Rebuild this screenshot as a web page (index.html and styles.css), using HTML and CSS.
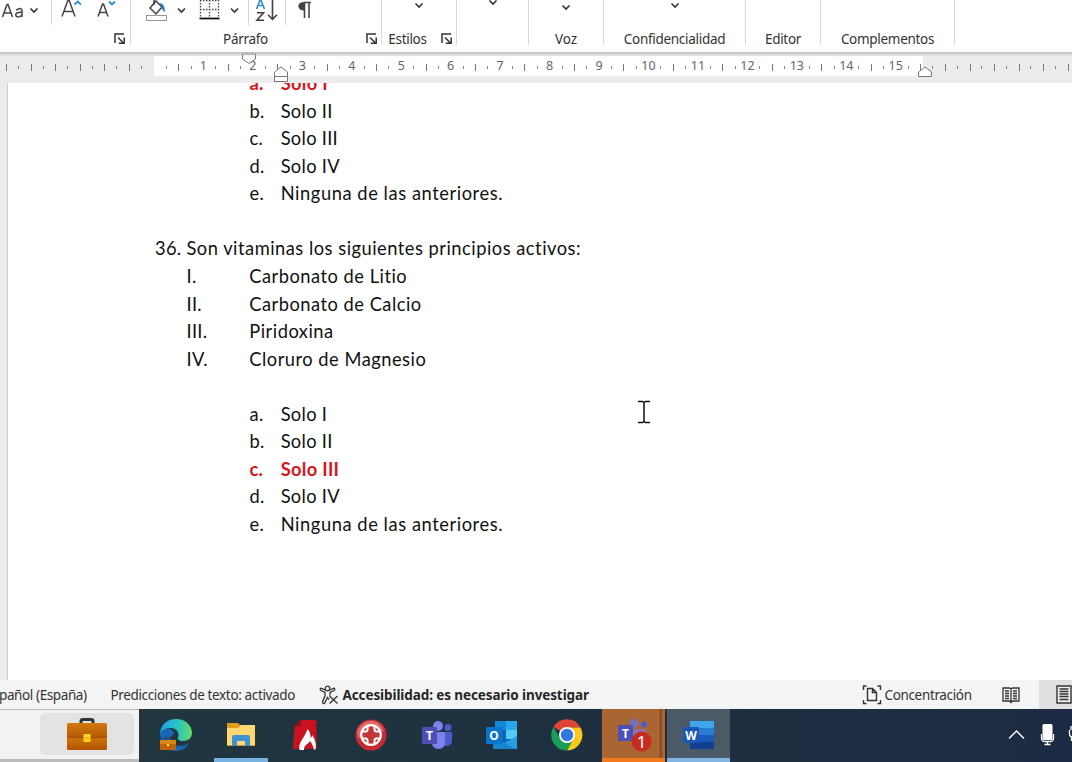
FILE: index.html
```html
<!DOCTYPE html>
<html lang="es">
<head>
<meta charset="utf-8">
<title>Documento - Word</title>
<link rel="stylesheet" href="styles.css">
</head>
<body>
<svg width="0" height="0" class="defs">
  <symbol id="chev" viewBox="0 0 10 7"><path d="M1.500 1.500 5 5 8.500 1.500" fill="none" stroke="#333" stroke-width="1.600"/></symbol>
  <symbol id="launch" viewBox="0 0 12 12"><path d="M1 10V1H10M4 4.500 9 9.500M10.200 4.500V10.200H4.800" fill="none" stroke="#333" stroke-width="1.500"/></symbol>
</svg>
<header class="ribbon">
  <section class="group g-font">
    <svg class="tools" width="130" height="27" viewBox="0 0 130 27">
      <g fill="none" stroke="#444" stroke-width="1.500">
        <path d="M2.500 17 7 4.500H8L12.500 17M4.200 13H10.800"/>
        <path d="M16 10.200Q22 6.500 22 11V17M22 12.300C17 12 15.500 13.500 15.700 15.200 16 17.500 20.500 17.600 22 14.500"/>
        <path d="M62 16.500 68 0H69L75 16.500M64.200 11.500H72.800"/>
        <path d="M98 16.500 102.500 4H103.500L108 16.500M99.800 12.500H106.200"/>
      </g>
      <path d="m30.500 8.500 3.500 3.500 3.500-3.500" fill="none" stroke="#333" stroke-width="1.600"/>
      <path d="m74.500 4.500 3.200-3 3.200 3M109 1.500l3 3 3-3" fill="none" stroke="#2b8fd0" stroke-width="1.800"/>
      <path d="M51.500 0V25" stroke="#d5d5d5"/>
    </svg>
    <div class="caption"><svg class="launch"><use href="#launch"/></svg></div>
  </section>
  <section class="group g-par">
    <svg class="tools" width="250" height="27" viewBox="131 0 250 27">
      <rect x="146.500" y="15.500" width="20" height="5" fill="#fff" stroke="#999"/>
      <path d="m150 8 6-7 6 6-6 7zM154 0v5" fill="none" stroke="#444" stroke-width="1.500"/>
      <path d="M159 3q6 0 6 9-3-1-3-5z" fill="#2680c2"/>
      <path d="m178 8.500 3.500 3.500 3.500-3.500M231 8.500l3.500 3.500 3.500-3.500" fill="none" stroke="#333" stroke-width="1.600"/>
      <path d="M200.500 0V18M209.500 0V18M218.500 0V18M200 .500H219M200 9.500H219" fill="none" stroke="#444" stroke-width="1.300" stroke-dasharray="1.500 1.500"/>
      <path d="M199.500 18.500H219.500" stroke="#111" stroke-width="1.800"/>
      <path d="M248.500 0V25M285.500 0V25" stroke="#d5d5d5"/>
      <path d="m256.500 9 4-10 4 10M258 5.500H263" fill="none" stroke="#2b8fd0" stroke-width="1.600"/>
      <path d="M257 12.800H263.500L257 20.200H264M272.500 0V19M268 14.800l4.500 4.500 4.500-4.500" fill="none" stroke="#444" stroke-width="1.600"/>
      <path d="M304 2.500H311M304.500 2.500V18M309 2.500V18" fill="none" stroke="#444" stroke-width="1.600"/>
      <path d="M305 2C296 1.500 296 11 305 10.500z" fill="#444"/>
    </svg>
    <div class="caption"><span class="t-par">Párrafo</span><svg class="launch"><use href="#launch"/></svg></div>
  </section>
  <section class="group g-sty">
    <svg class="chev"><use href="#chev"/></svg>
    <div class="caption"><span class="t-sty">Estilos</span><svg class="launch"><use href="#launch"/></svg></div>
  </section>
  <section class="group g-edit"><svg class="chev up"><use href="#chev"/></svg></section>
  <section class="group g-voz"><svg class="chev low"><use href="#chev"/></svg><div class="caption"><span class="t-voz">Voz</span></div></section>
  <section class="group g-conf"><svg class="chev"><use href="#chev"/></svg><div class="caption"><span class="t-conf">Confidencialidad</span></div></section>
  <section class="group g-editor"><div class="caption"><span class="t-editor">Editor</span></div></section>
  <section class="group g-comp"><div class="caption"><span class="t-comp">Complementos</span></div></section>
</header>
<div class="ruler">
  <div class="margin-left"></div>
  <div class="scale"><b>1</b><b>2</b><b>3</b><b>4</b><b>5</b><b>6</b><b>7</b><b>8</b><b>9</b><b>10</b><b>11</b><b>12</b><b>13</b><b>14</b><b>15</b></div>
  <div class="margin-right"></div>
  <svg class="marker first" width="16" height="12" viewBox="0 0 16 12"><path d="M1.500 1H14.500V6L8 10.500 1.500 6z" fill="#fff" stroke="#777"/></svg>
  <svg class="marker hang" width="16" height="17" viewBox="0 0 16 17"><path d="M1.500 15.500V6L8 1 14.500 6V15.500zM1.500 10.500H14.500" fill="#fff" stroke="#777"/></svg>
  <svg class="marker right" width="16" height="12" viewBox="0 0 16 12"><path d="M1.500 10.500V6L8 1 14.500 6V10.500z" fill="#fff" stroke="#777"/></svg>
</div>
<main class="canvas">
  <article class="page">
    <p class="opt key"><i>a.</i><span class="w-solo">Solo I</span></p>
    <p class="opt"><i>b.</i><span class="w-solo">Solo II</span></p>
    <p class="opt"><i>c.</i><span class="w-solo">Solo III</span></p>
    <p class="opt"><i>d.</i><span class="w-solo">Solo IV</span></p>
    <p class="opt"><i>e.</i><span class="w-none">Ninguna de las anteriores.</span></p>
    <p></p>
    <p class="question"><i>36.</i><span>Son vitaminas los siguientes principios activos:</span></p>
    <p class="item"><i>I.</i><span>Carbonato de Litio</span></p>
    <p class="item"><i>II.</i><span>Carbonato de Calcio</span></p>
    <p class="item"><i>III.</i><span>Piridoxina</span></p>
    <p class="item"><i>IV.</i><span>Cloruro de Magnesio</span></p>
    <p></p>
    <p class="opt"><i>a.</i><span class="w-solo">Solo I</span></p>
    <p class="opt"><i>b.</i><span class="w-solo">Solo II</span></p>
    <p class="opt key"><i>c.</i><span class="w-solo">Solo III</span></p>
    <p class="opt"><i>d.</i><span class="w-solo">Solo IV</span></p>
    <p class="opt"><i>e.</i><span class="w-none">Ninguna de las anteriores.</span></p>
  </article>
  <svg class="cursor" width="14" height="24" viewBox="0 0 14 24"><path d="M1 1.500H5.500L7 2.500 8.500 1.500H13M1 22.500H5.500L7 21.500 8.500 22.500H13M7 2V22" fill="none" stroke="#111" stroke-width="1.500"/></svg>
</main>
<footer class="status">
  <span class="lang">pañol (España)</span>
  <span class="pred">Predicciones de texto: activado</span>
  <svg class="acc-icon" width="20" height="20" viewBox="0 0 20 20"><g fill="none" stroke="#333" stroke-width="1.300"><circle cx="8.500" cy="3.500" r="2.300"/><path d="M6 5 2.500 3.300C1 3 .7 4.800 2 5.500L6 7.500V11L3.500 17C3.500 19 5.500 19 6 17.500L8.500 12.500 10 14.500M11 5 14.500 3.300C16 3 16.300 4.800 15 5.500L11 7.500V10.500M10.500 11 18.500 18.500M18.500 11 10.500 18.500"/></g></svg>
  <strong class="acc">Accesibilidad: es necesario investigar</strong>
  <svg class="focus-icon" width="20" height="20" viewBox="0 0 20 20"><g fill="none" stroke="#333" stroke-width="1.400"><path d="M4.500 1H1.500V5M15.500 1H18.500V5M1.500 15V18.500H4.500M18.500 15V18.500H15.500M5.500 3.500H10.500L14.500 7.500V15.500H5.500zM10.500 3.500V7.500H14.500"/></g></svg>
  <span class="focus">Concentración</span>
  <svg class="read" width="18" height="18" viewBox="0 0 18 18"><path d="M1 2H7.500L9 3 10.500 2H17V15H10.500L9 16.500 7.500 15H1zM9 3V16M3 5H7M3 7.500H7M3 10H7M3 12.500H7M11 5H15M11 7.500H15M11 10H15M11 12.500H15" fill="none" stroke="#333" stroke-width="1.300"/></svg>
  <div class="print"><svg width="16" height="19" viewBox="0 0 16 19"><path d="M1 1H15V18H1zM3.500 4H12.500M3.500 6.500H12.500M3.500 9H12.500M3.500 11.500H12.500M3.500 14.500H12.500" fill="#eee" stroke="#333" stroke-width="1.400"/></svg></div>
</footer>
<nav class="taskbar">
  <div class="search"><div class="pill">
    <svg width="42" height="34" viewBox="0 0 42 34">
      <defs><linearGradient id="case" x2="0" y2="1"><stop stop-color="#d27b0d"/><stop offset=".5" stop-color="#b65b08"/><stop offset=".52" stop-color="#ce7607"/><stop offset="1" stop-color="#b35304"/></linearGradient></defs>
      <path d="M15 7V4Q15 2.500 17 2.500H25Q27 2.500 27 4V7" fill="none" stroke="#333" stroke-width="3"/>
      <rect x="1" y="6" width="40" height="27" rx="1.500" fill="url(#case)"/><path d="M1 20Q21 22 41 20" fill="none" stroke="#9b4a05"/><rect x="17.500" y="17" width="7" height="8" fill="#ffd51e"/><path d="M19 21H23" stroke="#e69a00"/>
    </svg></div></div>
  <div class="app edge"><svg width="34" height="34" viewBox="0 0 34 34">
    <defs><linearGradient id="eg"><stop stop-color="#219de4"/><stop offset=".55" stop-color="#25c6c5"/><stop offset="1" stop-color="#6bdb61"/></linearGradient></defs>
    <path d="M1 17C1 7 8 1 17 1 27 1 33 8 33 15 33 20 29 23 24 23 20 23 18 21 19 19 21 16 18 10 12 10 6 10 2 13 1 17z" fill="url(#eg)"/>
    <path d="M1 16C4 9 14 9 15 16 9 19 12 28 20 28 25 28 28 26 30 25 27 31 22 33 17 33 8 33 1 26 1 16z" fill="#1467b5"/>
    <path d="M1 22H17V32H1z" fill="#bd6509"/><path d="M1 22H17V26H1z" fill="#db8517"/><path d="M6 22V20H12V22" fill="none" stroke="#4a2a10"/><path d="M8 26H10V28H8z" fill="#ffe354"/></svg></div>
  <div class="app active"><svg width="30" height="26" viewBox="0 0 30 26"><path d="M1 1H12L14 3H29V24H1z" fill="#e49a20"/><path d="M1 6H12L15 3H29V23H1z" fill="#ffd873"/><path d="M6 24V15Q6 13 8 13H22Q24 13 24 15V24H19V19H11V24z" fill="#3c92d3"/></svg></div>
  <div class="app"><svg width="28" height="32" viewBox="0 0 28 32"><path d="M9 1H22Q24.500 1 24.500 4V30H1L2.500 7z" fill="#c8131f"/><path d="M2.500 7 9 1V7z" fill="#8e1018"/><path d="M7.500 31C6 23 12 20 15.500 10 19 13 18 17 19 19L20.500 16C22 20 25 24 23.500 30L22 31C21.500 27 20 25 18 22 16 26 12 25 12 31z" fill="#fff"/></svg></div>
  <div class="app"><svg width="32" height="32" viewBox="0 0 32 32"><circle cx="16" cy="16" r="15.500" fill="#c92930"/><path d="M2 12Q8 0 19 2 28 5 29 13 15 5 3 20z" fill="#e36966"/><circle cx="16" cy="16" r="9.800" fill="#c5363a" stroke="#fff" stroke-width="2.200"/><path d="M12.500 6.500V10.500Q12.500 12.500 10.500 12.500H6.500M19.500 6.500V10.500Q19.500 12.500 21.500 12.500H25.500M12.500 25.500V21.500Q12.500 19.500 10.500 19.500H6.500M19.500 25.500V21.500Q19.500 19.500 21.500 19.500H25.500" fill="none" stroke="#fff" stroke-width="2"/></svg></div>
  <div class="app"><svg width="32" height="30" viewBox="0 0 32 30"><circle cx="17" cy="6" r="5" fill="#7b83eb"/><circle cx="27" cy="7.500" r="3.500" fill="#5059c9"/><path d="M20 12H31V20Q31 26 25 26H20z" fill="#5059c9"/><path d="M11 12H24V22Q24 29 17.500 29T11 22z" fill="#7b83eb"/><rect x="1" y="7" width="15" height="17" rx="1" fill="#4b50b7"/><text x="8.500" y="19.500" class="logo">T</text></svg></div>
  <div class="app"><svg width="32" height="30" viewBox="0 0 32 30"><path d="M9 1H31V29H9z" fill="#1066b5"/><path d="M9 1H20V10H9z" fill="#1687d3"/><path d="M20 1H31V10H20z" fill="#28a8ea"/><path d="M20 10H31V19H20z" fill="#50cbf4"/><path d="M7 29 31 16V29z" fill="#269de5"/><path d="M7 17 30 29H7z" fill="#1785cf"/><rect x="0" y="7" width="16" height="17" rx="1" fill="#0875cf"/><text x="8" y="19.500" class="logo">O</text></svg></div>
  <div class="app"><svg width="32" height="32" viewBox="0 0 32 32"><path d="M16 16 2.500 8A15.500 15.500 0 0 1 29.500 8.500H16z" fill="#df4437"/><path d="M16 8.500H29.500A15.500 15.500 0 0 1 16 31.500L23 18z" fill="#fbc919"/><path d="M2.500 8 9.500 20 16 23 22.500 20 16 31.500A15.500 15.500 0 0 1 2.500 8z" fill="#1b9e56"/><circle cx="16" cy="16" r="8" fill="#fff"/><circle cx="16" cy="16" r="6.200" fill="#3277df"/></svg></div>
  <div class="app alert"><svg width="36" height="36" viewBox="0 0 36 36"><circle cx="18" cy="6" r="4.500" fill="#7770bd"/><circle cx="28" cy="7.500" r="3" fill="#5059c9"/><path d="M14 12H30V24H14z" fill="#8b75aa"/><rect x="2" y="8" width="15" height="16" fill="#4b50b7"/><text x="9.500" y="20.500" class="logo">T</text><circle cx="25.500" cy="24.500" r="10" fill="#c72b20"/><text x="25.500" y="30.500" class="count">1</text></svg></div>
  <div class="app word"><svg width="32" height="30" viewBox="0 0 32 30"><path d="M7 1H31V8H7z" fill="#41a5ee"/><path d="M7 8H31V15H7z" fill="#2b7cd3"/><path d="M7 15H31V22H7z" fill="#185abd"/><path d="M7 22H31V29H7z" fill="#10408f"/><rect x="0" y="7" width="16" height="16" rx="1" fill="#1857b6"/><text x="8" y="19.500" class="logo">W</text></svg></div>
  <div class="tray"><svg width="72" height="30" viewBox="1000 720 72 30"><path d="m1009 738.500 7.500-7.500 7.500 7.500" fill="none" stroke="#fff" stroke-width="1.400"/><rect x="1042.500" y="724" width="10" height="16" rx="1.500" fill="#fff"/><path d="M1041.500 734V738Q1041.500 741.500 1045 741.500H1050Q1053.500 741.500 1053.500 738V734M1047.500 741V744M1044.500 744.500H1050.500M1071 726V730M1069.500 730V734Q1069.500 737 1073 737M1071.500 737V741" fill="none" stroke="#fff" stroke-width="1.300"/></svg></div>
</nav>
</body>
</html>
```
FILE: styles.css
```css
* { box-sizing: border-box; }
body { margin: 0; width: 1072px; height: 762px; overflow: hidden; display: flex; flex-direction: column; background: #fff; font-family: "Noto Sans", "Open Sans", sans-serif; color: #333; }
svg { display: block; flex: none; }
.defs { position: absolute; }

.ribbon { height: 53px; flex: none; display: flex; background: #fff; border-bottom: 1px solid #c2c2c2; position: relative; z-index: 1; box-shadow: 0 1px 3px #bbb; }
.group { height: 45px; flex: none; display: flex; flex-direction: column; justify-content: space-between; align-items: center; border-right: 1px solid #d8d8d8; }
.g-font { width: 131px; }
.g-par { width: 251px; }
.g-sty { width: 75px; }
.g-edit { width: 72px; }
.g-voz { width: 75px; }
.g-conf { width: 142px; }
.g-editor { width: 75px; }
.g-comp { width: 134px; }
.chev { width: 10px; height: 7px; margin-top: 2px; }
.chev.up { margin-top: -1px; }
.chev.low { margin-top: 4px; }
.caption { height: 18px; width: 100%; margin-top: auto; margin-bottom: -3px; display: flex; align-items: center; justify-content: center; font-size: 13.500px; line-height: 18px; white-space: nowrap; }
.launch { width: 12px; height: 12px; }
.g-font .caption { justify-content: flex-end; padding-right: 4px; }
.g-par .caption { justify-content: flex-end; padding-right: 3px; gap: 98px; }
.g-sty .caption { gap: 14px; padding-left: 3px; }
.t-par, .t-sty, .t-editor, .t-conf, .t-comp { letter-spacing: -.3px; }

.ruler { height: 30px; flex: none; display: flex; padding-top: 3px; background: #ececec; position: relative; }
.margin-left, .margin-right, .scale { height: 20px; }
.margin-left { width: 154px; background: repeating-linear-gradient(90deg, #777 0 1px, transparent 1px 24.600px) 6px 8px / 139px 7px no-repeat, repeating-linear-gradient(90deg, #888 0 1px, transparent 1px 24.600px) 18px 10px / 125px 3px no-repeat; }
.scale { width: 769px; display: flex; padding-left: 24.700px; color: #666; background: repeating-linear-gradient(90deg, transparent 0 24.230px, #777 24.230px 25.230px, transparent 25.230px 49.460px) 0 8px / 769px 7px no-repeat, repeating-linear-gradient(90deg, transparent 0 11.900px, #888 11.900px 12.900px, transparent 12.900px 24.730px) 0 10px / 769px 3px no-repeat, #fff; }
.scale b { width: 49.460px; flex: none; text-align: center; font: 12.500px/20px "Noto Sans", sans-serif; }
.margin-right { flex: 1; background: repeating-linear-gradient(90deg, #777 0 1px, transparent 1px 24.600px) 22px 8px / 130px 7px no-repeat, repeating-linear-gradient(90deg, #888 0 1px, transparent 1px 24.600px) 9px 10px / 143px 3px no-repeat; }
.marker { position: absolute; }
.marker.first { left: 241px; top: 0; }
.marker.hang { left: 273px; top: 13px; }
.marker.right { left: 917px; top: 13px; }

.canvas { height: 597px; flex: none; overflow: hidden; padding-left: 7px; background: #ececec; position: relative; }
.page { height: 597px; border-left: 1px solid #ccc; background: #fff; padding-left: 147px; overflow: hidden; font: 18.300px/27.570px Lato, sans-serif; font-variant-ligatures: none; letter-spacing: .5px; color: #111; }
.page p { height: 27.570px; margin: 0; display: flex; white-space: nowrap; }
.page p:first-child { margin-top: -13px; }
.page i { font-style: normal; flex: none; letter-spacing: .3px; }
.w-solo { letter-spacing: .3px; }
.w-none { letter-spacing: .570px; }
.opt { padding-left: 94.500px; }
.opt i { width: 31.200px; }
.item { padding-left: 31.500px; }
.item i { width: 62.800px; }
.question i { width: 31.500px; }
.page .key { color: #da151a; font-weight: 700; }
.cursor { position: absolute; left: 637px; top: 317px; }

.status { height: 29px; flex: none; display: flex; align-items: center; background: #f4f4f4; font-size: 13.500px; line-height: 20px; white-space: nowrap; }
.lang { width: 111.500px; margin-left: -1px; letter-spacing: -.4px; }
.pred { width: 208px; letter-spacing: -.36px; }
.acc-icon { margin-right: 4px; }
.acc { width: 519px; letter-spacing: -.1px; color: #262626; }
.focus-icon { margin-right: 3px; }
.focus { width: 117px; letter-spacing: -.35px; }
.read { margin-right: 19px; }
.print { flex: 1; height: 29px; display: flex; align-items: center; padding-left: 17px; background: #e0e0e0; overflow: hidden; }

.taskbar { height: 53px; flex: none; display: flex; background: linear-gradient(90deg, #21363f 140px, #1e3040 600px, #1c2b43); }
.search { width: 139px; padding: 3px 5px 0 40px; background: #f2f2f2; border-bottom: 3px solid #bcbcbc; border-top: 1px solid #bbb; }
.pill { height: 42px; border-radius: 6px; display: flex; align-items: center; justify-content: center; background: #e3e3e3; }
.app { width: 54px; margin-right: 11.300px; flex: none; display: flex; align-items: center; justify-content: center; border-bottom: 4px solid transparent; padding-top: 3px; }
.edge { margin-left: 9.500px; }
.active { border-color: #77b2e3; }
.alert { width: 63px; margin: 0 2px 0 -3.500px; background: linear-gradient(90deg, #a96532 57px, #8c4d25 58px 60px, #a96532 60px); border-color: #f47a1c; }
.word { width: 63px; margin: 0; background: #4b5a67; border-color: #83b5e3; }
.logo { font: 700 12px "Noto Sans", sans-serif; fill: #fff; text-anchor: middle; }
.count { font: 17px "Noto Sans", sans-serif; fill: #fff; text-anchor: middle; }
.tray { margin-left: auto; padding-top: 11px; }
```
